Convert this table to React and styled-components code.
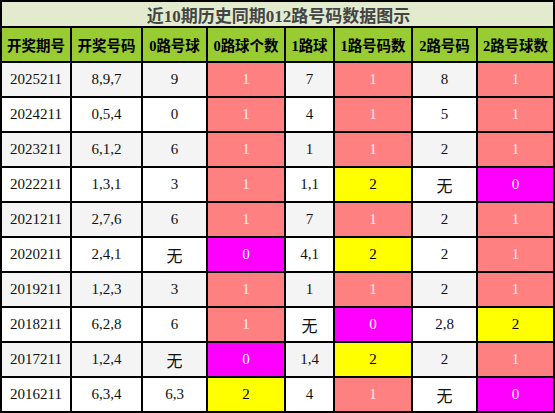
import React from 'react';
import styled, { createGlobalStyle } from 'styled-components';

const GlobalStyle = createGlobalStyle`
  body {
    margin: 0;
    background: #fff;
  }
`;

const heads = ['开奖期号', '开奖号码', '0路号球', '0路球个数', '1路球', '1路号码数', '2路号码', '2路号球数'];

const rows = [
  ['2025211', '8,9,7', '9', '1', '7', '1', '8', '1'],
  ['2024211', '0,5,4', '0', '1', '4', '1', '5', '1'],
  ['2023211', '6,1,2', '6', '1', '1', '1', '2', '1'],
  ['2022211', '1,3,1', '3', '1', '1,1', '2', '无', '0'],
  ['2021211', '2,7,6', '6', '1', '7', '1', '2', '1'],
  ['2020211', '2,4,1', '无', '0', '4,1', '2', '2', '1'],
  ['2019211', '1,2,3', '3', '1', '1', '1', '2', '1'],
  ['2018211', '6,2,8', '6', '1', '无', '0', '2,8', '2'],
  ['2017211', '1,2,4', '无', '0', '1,4', '2', '2', '1'],
  ['2016211', '6,3,4', '6,3', '2', '4', '1', '无', '0'],
];

const countCols = [3, 5, 7];

export default function App() {
  return (
    <>
      <GlobalStyle />
      <Board>
        <Title>近10期历史同期012路号码数据图示</Title>
        {heads.map((h) => (
          <HeadCell key={h}>{h}</HeadCell>
        ))}
        {rows.map((row, r) =>
          row.map((v, c) => (
            <Cell
              key={r + '-' + c}
              $alt={r % 2 === 0}
              $tone={countCols.includes(c) ? v : null}
              $wide={v === '无'}
            >
              {v}
            </Cell>
          ))
        )}
      </Board>
    </>
  );
}

const Board = styled.div`
  display: grid;
  grid-template-columns: 68px 69px 63px 76px 47px 76px 63px 75px;
  grid-template-rows: 24px 33px repeat(10, 33px);
  gap: 2px;
  padding: 2px;
  width: 555px;
  box-sizing: border-box;
  background: #000;
  font-family: "Liberation Serif", "Noto Sans CJK SC", serif;
`;

const Title = styled.div`
  grid-column: 1 / -1;
  background: #e3ebcf;
  color: #444;
  font-size: 17px;
  font-weight: bold;
  display: flex;
  align-items: center;
  justify-content: center;
  padding-left: 2px;
`;

const HeadCell = styled.div`
  background: #99cc33;
  color: #000;
  font-size: 14.5px;
  font-weight: bold;
  display: flex;
  align-items: center;
  justify-content: center;
  white-space: nowrap;
`;

const toneBg = { '1': '#ff8080', '2': '#ffff00', '0': '#ff00ff' };
const toneFg = { '1': '#ffecec', '2': '#000', '0': '#fff' };

const Cell = styled.div`
  background: ${(p) => (p.$tone ? toneBg[p.$tone] : p.$alt ? '#f4f4f4' : '#fff')};
  color: ${(p) => (p.$tone ? toneFg[p.$tone] : '#111')};
  font-size: ${(p) => (p.$wide ? '16px' : '15px')};
  display: flex;
  align-items: center;
  justify-content: center;
`;
